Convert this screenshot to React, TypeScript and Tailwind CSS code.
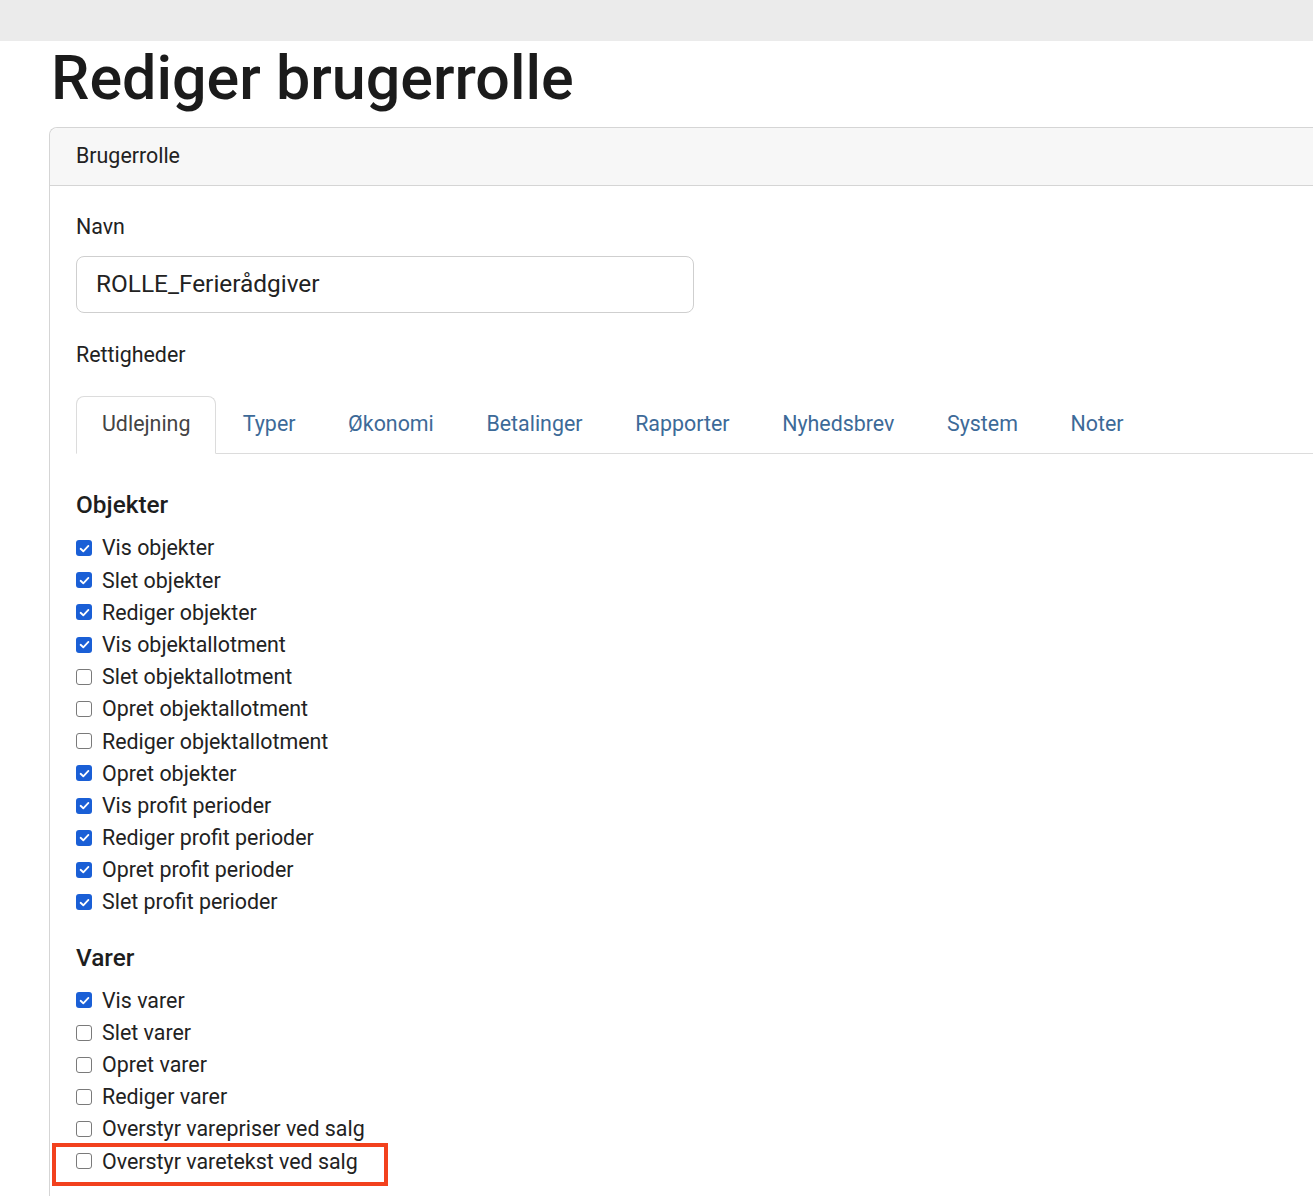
import React from "react";

type Item = { label: string; checked: boolean };

const objekter: Item[] = [
  { label: "Vis objekter", checked: true },
  { label: "Slet objekter", checked: true },
  { label: "Rediger objekter", checked: true },
  { label: "Vis objektallotment", checked: true },
  { label: "Slet objektallotment", checked: false },
  { label: "Opret objektallotment", checked: false },
  { label: "Rediger objektallotment", checked: false },
  { label: "Opret objekter", checked: true },
  { label: "Vis profit perioder", checked: true },
  { label: "Rediger profit perioder", checked: true },
  { label: "Opret profit perioder", checked: true },
  { label: "Slet profit perioder", checked: true },
];

const varer: Item[] = [
  { label: "Vis varer", checked: true },
  { label: "Slet varer", checked: false },
  { label: "Opret varer", checked: false },
  { label: "Rediger varer", checked: false },
  { label: "Overstyr varepriser ved salg", checked: false },
  { label: "Overstyr varetekst ved salg", checked: false },
];

const tabs = ["Udlejning", "Typer", "Økonomi", "Betalinger", "Rapporter", "Nyhedsbrev", "System", "Noter"];

function Box({ checked }: { checked: boolean }) {
  if (checked) {
    return (
      <span className="flex h-[16px] w-[16px] shrink-0 items-center justify-center rounded-[3px] bg-[#1a5fd6]">
        <svg viewBox="0 0 16 16" className="h-[13px] w-[13px]">
          <path d="M3.2 8.3 L6.5 11.4 L12.8 4.8" fill="none" stroke="#ffffff" strokeWidth="2.2" strokeLinecap="round" strokeLinejoin="round" />
        </svg>
      </span>
    );
  }
  return <span className="h-[16px] w-[16px] shrink-0 rounded-[3px] border-[1.5px] border-[#7a7a7a] bg-white" />;
}

function Row({ item, highlight }: { item: Item; highlight?: boolean }) {
  return (
    <div className="relative flex h-[32.2px] items-center gap-[10px]">
      <Box checked={item.checked} />
      <span className="text-[21.4px] leading-none text-[#222222]">{item.label}</span>
      {highlight && (
        <div className="pointer-events-none absolute left-[-24px] top-[-2px] h-[43px] w-[336px] border-[4px] border-[#f2411d]" />
      )}
    </div>
  );
}

export default function App() {
  return (
    <div className="h-[1196px] w-[1316px] overflow-hidden bg-white font-['Roboto',sans-serif] text-[#212529]">
      <div className="h-[41px] w-[1313px] bg-[#ebebeb]" />
      <div className="w-[1313px] pl-[49px]">
        <h1 className="mt-[6px] text-[61px] font-medium leading-[62px] text-[#1b1b1b]">
          <span className="ml-[2px]">Rediger brugerrolle</span>
        </h1>
        <div className="mt-[18px] rounded-tl-[8px] border-l border-t border-[#d5d5d5]">
          <div className="flex h-[58px] items-center rounded-tl-[8px] border-b border-[#d5d5d5] bg-[#f7f7f7] px-[26px] text-[21.4px] text-[#222222]">
            Brugerrolle
          </div>
          <div className="px-[26px] pt-[25px] pb-[40px]">
            <div className="text-[21.4px] leading-[32px] text-[#222222]">Navn</div>
            <div className="mt-[13px] flex h-[57px] w-[618px] items-center rounded-[8px] border border-[#cfcfcf] px-[19px] text-[24.4px] text-[#222222]">
              ROLLE_Ferierådgiver
            </div>
            <div className="mt-[26px] text-[21.4px] leading-[32px] text-[#222222]">Rettigheder</div>
            <div className="mt-[25px] -mr-[26px] flex border-b border-[#dcdcdc]">
              {tabs.map((t, i) =>
                i === 0 ? (
                  <div
                    key={t}
                    className="-mb-px flex h-[58px] items-center rounded-t-[8px] border border-b-white border-[#dcdcdc] bg-white px-[25px] pb-[1px] text-[21.4px] text-[#444444]"
                  >
                    {t}
                  </div>
                ) : (
                  <div key={t} className="flex h-[57px] items-center px-[26.3px] text-[21.4px] text-[#3d6a98]">
                    {t}
                  </div>
                )
              )}
            </div>
            <div className="mt-[35px] text-[24.4px] font-medium leading-[32px] text-[#1e1e1e]">Objekter</div>
            <div className="mt-[11px]">
              {objekter.map((it) => (
                <Row key={it.label} item={it} />
              ))}
            </div>
            <div className="mt-[24px] text-[24.4px] font-medium leading-[32px] text-[#1e1e1e]">Varer</div>
            <div className="mt-[10px]">
              {varer.map((it, i) => (
                <Row key={it.label} item={it} highlight={i === varer.length - 1} />
              ))}
            </div>
          </div>
        </div>
      </div>
    </div>
  );
}
